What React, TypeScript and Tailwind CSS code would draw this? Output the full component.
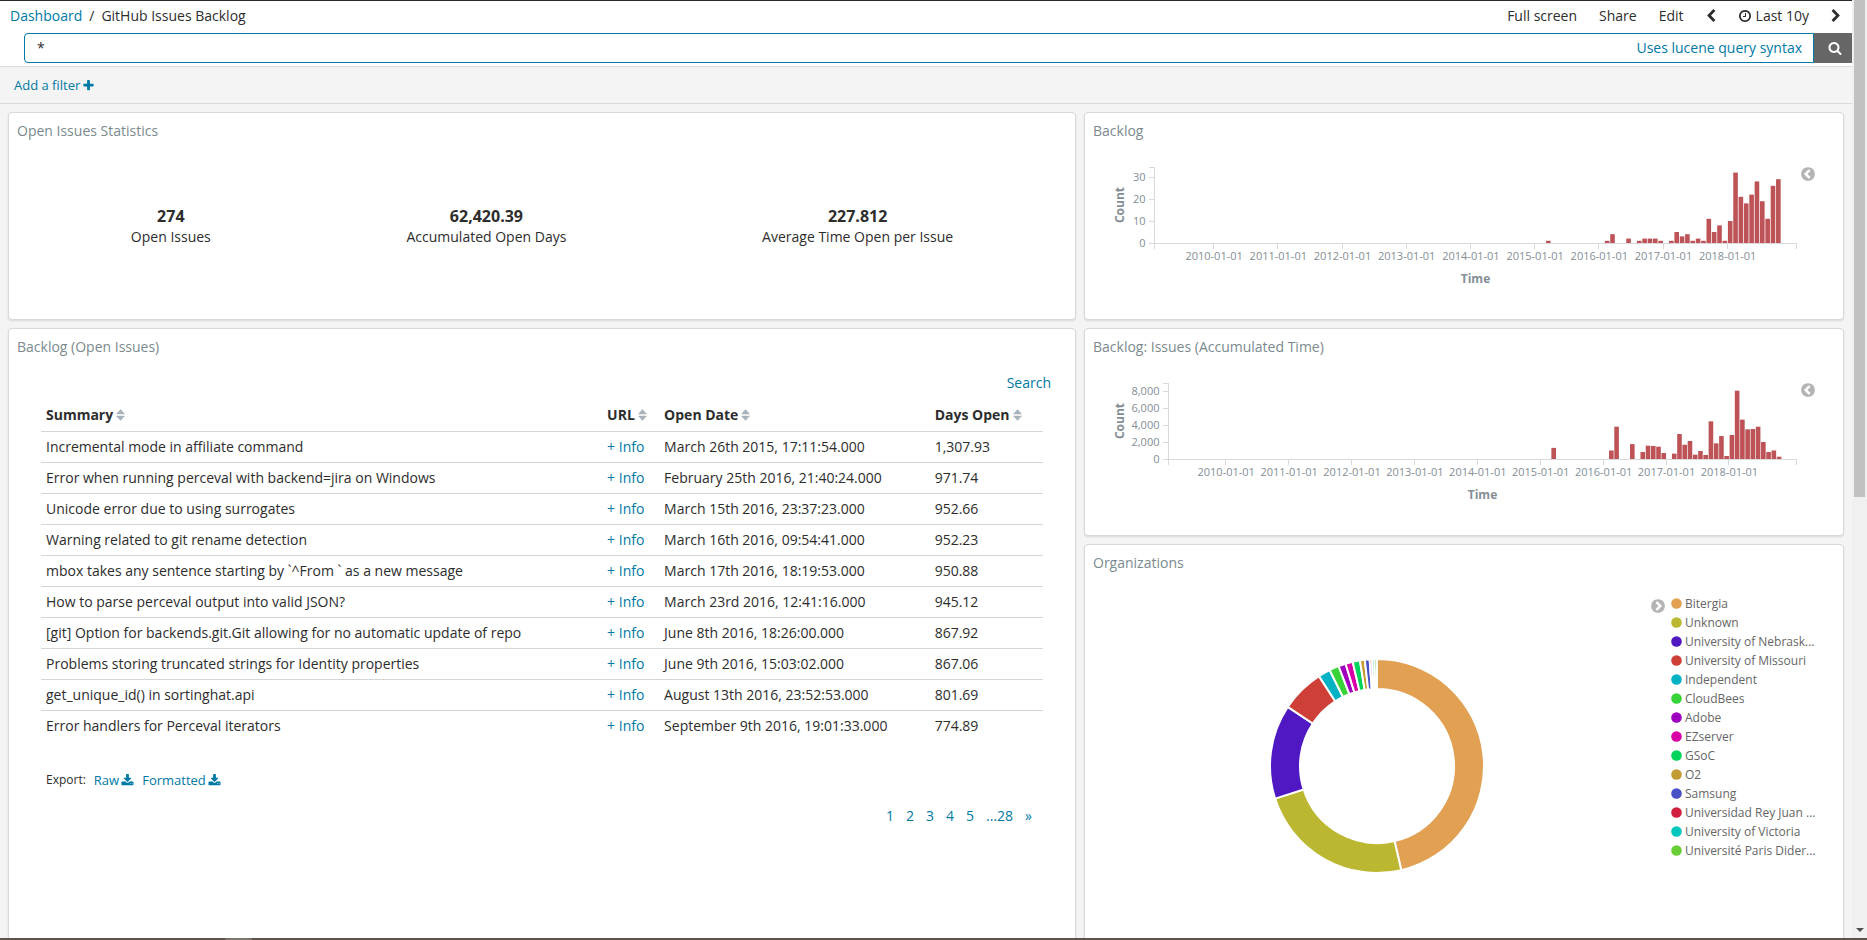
import type { ReactNode } from "react";

const ICONS = {
  clock:
    "M1024 544v448q0 14-9 23t-23 9h-320q-14 0-23-9t-9-23v-64q0-14 9-23t23-9h224v-352q0-14 9-23t23-9h64q14 0 23 9t9 23zm416 352q0-148-73-273t-198-198-273-73-273 73-198 198-73 273 73 273 198 198 273 73 273-73 198-198 73-273zm224 0q0 209-103 385.5t-279.5 279.5-385.5 103-385.5-103-279.5-279.5-103-385.5 103-385.5 279.5-279.5 385.5-103 385.5 103 279.5 279.5 103 385.5z",
  search:
    "M1216 832q0-185-131.5-316.5t-316.5-131.5-316.5 131.5-131.5 316.5 131.5 316.5 316.5 131.5 316.5-131.5 131.5-316.5zm512 832q0 52-38 90t-90 38q-54 0-90-38l-343-342q-179 124-399 124-143 0-273.5-55.5t-225-150-150-225-55.5-273.5 55.5-273.5 150-225 225-150 273.5-55.5 273.5 55.5 225 150 150 225 55.5 273.5q0 220-124 399l343 343q37 37 37 90z",
  plus: "M1600 736v192q0 40-28 68t-68 28h-416v416q0 40-28 68t-68 28h-192q-40 0-68-28t-28-68v-416h-416q-40 0-68-28t-28-68v-192q0-40 28-68t68-28h416v-416q0-40 28-68t68-28h192q40 0 68 28t28 68v416h416q40 0 68 28t28 68z",
  download:
    "M1344 1344q0-26-19-45t-45-19-45 19-19 45 19 45 45 19 45-19 19-45zm256 0q0-26-19-45t-45-19-45 19-19 45 19 45 45 19 45-19 19-45zm128-224v320q0 40-28 68t-68 28h-1472q-40 0-68-28t-28-68v-320q0-40 28-68t68-28h465l135 136q58 56 136 56t136-56l136-136h464q40 0 68 28t28 68zm-325-569q17 41-14 70l-448 448q-18 19-45 19t-45-19l-448-448q-31-29-14-70 17-39 59-39h256v-448q0-26 19-45t45-19h256q26 0 45 19t19 45v448h256q42 0 59 39z",
  chevronLeft:
    "M1427 301l-531 531 531 531q19 19 19 45t-19 45l-166 166q-19 19-45 19t-45-19l-742-742q-19-19-19-45t19-45l742-742q19-19 45-19t45 19l166 166q19 19 19 45t-19 45z",
  chevronRight:
    "M1363 877l-742 742q-19 19-45 19t-45-19l-166-166q-19-19-19-45t19-45l531-531-531-531q-19-19-19-45t19-45l166-166q19-19 45-19t45 19l742 742q19 19 19 45t-19 45z",
  circleLeft:
    "M1037 1395l102-102q19-19 19-45t-19-45l-307-307 307-307q19-19 19-45t-19-45l-102-102q-19-19-45-19t-45 19l-454 454q-19 19-19 45t19 45l454 454q19 19 45 19t45-19zm627-499q0 209-103 385.5t-279.5 279.5-385.5 103-385.5-103-279.5-279.5-103-385.5 103-385.5 279.5-279.5 385.5-103 385.5 103 279.5 279.5 103 385.5z",
};

function Icon({ name, className }: { name: keyof typeof ICONS; className: string }) {
  return (
    <svg viewBox="0 0 1792 1792" className={className} fill="currentColor" aria-hidden="true">
      <path d={ICONS[name]} />
    </svg>
  );
}

function Panel({ title, className = "", children }: { title: string; className?: string; children: ReactNode }) {
  return (
    <section
      className={`flex flex-col overflow-hidden rounded border border-[#d9d9d9] bg-white shadow-[0_1px_2px_rgba(0,0,0,0.12)] ${className}`}
    >
      <h2 className="flex h-9 shrink-0 items-center px-2 text-sm text-[#7b8a8e]">{title}</h2>
      {children}
    </section>
  );
}

function LegendToggle({ open = false }: { open?: boolean }) {
  return (
    <button
      type="button"
      aria-label="Toggle legend"
      className={`mt-[17px] flex h-4 w-[14px] shrink-0 items-center justify-center text-[#b4b4b4] ${open ? "rotate-180" : ""}`}
    >
      <Icon name="circleLeft" className="h-4 w-4 shrink-0" />
    </button>
  );
}

const STATS = [
  ["274", "Open Issues"],
  ["62,420.39", "Accumulated Open Days"],
  ["227.812", "Average Time Open per Issue"],
];

const ROWS = [
  ["Incremental mode in affiliate command", "March 26th 2015, 17:11:54.000", "1,307.93"],
  ["Error when running perceval with backend=jira on Windows", "February 25th 2016, 21:40:24.000", "971.74"],
  ["Unicode error due to using surrogates", "March 15th 2016, 23:37:23.000", "952.66"],
  ["Warning related to git rename detection", "March 16th 2016, 09:54:41.000", "952.23"],
  ["mbox takes any sentence starting by `^From ` as a new message", "March 17th 2016, 18:19:53.000", "950.88"],
  ["How to parse perceval output into valid JSON?", "March 23rd 2016, 12:41:16.000", "945.12"],
  ["[git] Option for backends.git.Git allowing for no automatic update of repo", "June 8th 2016, 18:26:00.000", "867.92"],
  ["Problems storing truncated strings for Identity properties", "June 9th 2016, 15:03:02.000", "867.06"],
  ["get_unique_id() in sortinghat.api", "August 13th 2016, 23:52:53.000", "801.69"],
  ["Error handlers for Perceval iterators", "September 9th 2016, 19:01:33.000", "774.89"],
];

// Months are counted from January 2018.
const MONTHS = [
  -34, -23, -22, -19, -17, -16, -15, -14, -13, -11, -10, -9, -8, -7, -6, -5, -4, -3, -2, -1, 0, 1, 2, 3, 4, 5, 6, 7, 8, 9,
];
const COUNTS = [1, 1, 4, 2, 1, 2, 2, 2, 1, 1, 5, 3, 4, 1, 2, 1, 11, 5, 8, 1, 10, 32, 21, 18, 22, 28, 19, 11, 26, 29];
const DAYS = [
  1308, 1000, 3800, 1750, 820, 1570, 1530, 1450, 700, 630, 2940, 1680, 2120, 510, 940, 470, 4430, 1840, 2700, 350, 2820,
  8040, 4630, 3490, 3530, 3800, 2000, 820, 1000, 270,
];

type ChartProps = {
  label: string;
  values: number[];
  ticks: number[];
  unit: number;
  axisX: number;
  start: number;
  year: number;
};

function BarChart({ label, values, ticks, unit, axisX, start, year }: ChartProps) {
  const base = 94.5;
  const right = 711.5;
  const years = [2010, 2011, 2012, 2013, 2014, 2015, 2016, 2017, 2018];
  return (
    <div className="flex items-start pr-7">
      <svg viewBox="0 0 716 170" className="min-w-0 flex-1" role="img" aria-label={label}>
        <g fill="#bd5257">
          {values.map((v, i) => (
            <rect
              key={MONTHS[i]}
              x={start + 0.2 + (MONTHS[i] * year) / 12}
              y={base - 0.5 - v * unit}
              width={4.6}
              height={v * unit}
            />
          ))}
        </g>
        <g stroke="#d9d9dc" fill="none" shapeRendering="crispEdges">
          <path d={`M${axisX - 6} 18.5H${axisX}V${base + 5.5}M${axisX - 6} ${base}H${right}V${base + 5.5}`} />
          {ticks.map((t) => (
            <path key={t} d={`M${axisX - 6} ${Math.round(base - t * unit - 0.5) + 0.5}H${axisX}`} />
          ))}
          {years.map((y) => (
            <path key={y} d={`M${Math.round(start - (2018 - y) * year) - 0.5} ${base}v5.5`} />
          ))}
        </g>
        <g fill="#848e96" fontSize={11}>
          {ticks.map((t) => (
            <text key={t} x={axisX - 9} y={base + 3 - t * unit} textAnchor="end">
              {t.toLocaleString("en-US")}
            </text>
          ))}
          {years.map((y) => (
            <text key={y} x={start - (2018 - y) * year} y={111} textAnchor="middle">
              {`${y}-01-01`}
            </text>
          ))}
        </g>
        <g fill="#848e96" fontSize={12} fontWeight={700} textAnchor="middle">
          <text x={(axisX + right) / 2} y={134}>
            Time
          </text>
          <text transform="translate(39 56) rotate(-90)">Count</text>
        </g>
      </svg>
      <LegendToggle />
    </div>
  );
}

const ORGS: [string, number, string][] = [
  ["Bitergia", 127, "#e1a052"],
  ["Unknown", 65, "#bcb730"],
  ["University of Nebrask...", 39, "#4f18c3"],
  ["University of Missouri", 18, "#ce4037"],
  ["Independent", 5, "#00b2c3"],
  ["CloudBees", 4, "#37d338"],
  ["Adobe", 3, "#9e00be"],
  ["EZserver", 3, "#d800a6"],
  ["GSoC", 3, "#00d45a"],
  ["O2", 2, "#c39b33"],
  ["Samsung", 2, "#4750c7"],
  ["Universidad Rey Juan ...", 1, "#d31f3f"],
  ["University of Victoria", 1, "#00c6bb"],
  ["Université Paris Dider...", 1, "#69ce35"],
];

function slicePath(from: number, to: number) {
  const outer = 107;
  const inner = 77;
  const point = (r: number, share: number) => {
    const a = share * 2 * Math.PI;
    return `${(r * Math.sin(a)).toFixed(3)} ${(-r * Math.cos(a)).toFixed(3)}`;
  };
  const large = to - from > 0.5 ? 1 : 0;
  return `M${point(outer, from)}A${outer} ${outer} 0 ${large} 1 ${point(outer, to)}L${point(inner, to)}A${inner} ${inner} 0 ${large} 0 ${point(inner, from)}Z`;
}

function Donut() {
  const total = ORGS.reduce((sum, org) => sum + org[1], 0);
  let sum = 0;
  return (
    <svg viewBox="-108 -108 216 216" className="h-[216px] w-[216px]" role="img" aria-label="Organizations">
      {ORGS.map(([name, value, color]) => {
        const from = sum / total;
        sum += value;
        return <path key={name} d={slicePath(from, sum / total)} fill={color} stroke="#fff" strokeWidth={2} />;
      })}
    </svg>
  );
}

function SortIcon() {
  return (
    <svg viewBox="0 0 9 12" className="h-3 w-[9px]" fill="#a9b3bb" aria-hidden="true">
      <path d="M4.5 0.5L8.5 5H0.5zM4.5 11.5L0.5 7H8.5z" stroke="#a9b3bb" strokeWidth={0.5} strokeLinejoin="round" />
    </svg>
  );
}

function Header({ children, className }: { children: string; className: string }) {
  return (
    <th scope="col" className={`h-[31px] px-[5px] text-left font-bold ${className}`}>
      <button type="button" className="flex items-center gap-[3px] whitespace-nowrap">
        {children}
        <SortIcon />
      </button>
    </th>
  );
}

export default function App() {
  return (
    <div className="flex h-screen flex-col overflow-hidden bg-[#f4f4f4] font-['Open_Sans','Noto_Sans',sans-serif] text-sm leading-5 text-[#2d2d2d]">
      <div className="flex min-h-0 flex-1">
        <div className="min-w-0 flex-1 overflow-hidden">
          <header className="border-t border-b border-t-[#2d2a2e] border-b-[#d9d9d9] bg-white pb-[3px]">
            <nav className="flex h-8 items-center justify-between pr-[11px] pb-[2px] pl-[10px]">
              <div className="flex gap-[7px]">
                <a href="#dashboards" className="text-[#0079a5]">
                  Dashboard
                </a>
                <span>/</span>
                <span>GitHub Issues Backlog</span>
              </div>
              <div className="flex items-center gap-[22px]">
                <button type="button">Full screen</button>
                <button type="button">Share</button>
                <button type="button">Edit</button>
                <button type="button" aria-label="Earlier" className="flex w-[10px] justify-center">
                  <Icon name="chevronLeft" className="h-[14px] w-[14px] shrink-0" />
                </button>
                <button type="button" className="flex items-center gap-1">
                  <Icon name="clock" className="h-[14px] w-[14px]" />
                  Last 10y
                </button>
                <button type="button" aria-label="Later" className="flex w-[10px] justify-center">
                  <Icon name="chevronRight" className="h-[14px] w-[14px] shrink-0" />
                </button>
              </div>
            </nav>
            <form className="flex h-[30px] pl-6" onSubmit={(e) => e.preventDefault()}>
              <div className="flex min-w-0 flex-1 items-center rounded-l border border-[#0079a5] pr-[11px] pl-3">
                <input
                  type="text"
                  aria-label="Search query"
                  defaultValue="*"
                  className="min-w-0 flex-1 bg-transparent outline-none"
                />
                <a href="#syntax" className="text-[#0079a5]">
                  Uses lucene query syntax
                </a>
              </div>
              <button
                type="submit"
                aria-label="Search"
                className="flex w-[38px] items-center justify-center bg-[#666] pl-1 text-white"
              >
                <Icon name="search" className="h-[14px] w-[14px]" />
              </button>
            </form>
          </header>

          <div className="flex h-[37px] items-center border-b border-[#d9d9d9] px-[14px]">
            <button type="button" className="flex items-center gap-[2px] text-[13px] text-[#0079a5]">
              Add a filter
              <Icon name="plus" className="h-[13px] w-[13px]" />
            </button>
          </div>

          <main className="grid grid-cols-[1068fr_760fr] gap-2 p-2">
            <div className="flex min-w-0 flex-col gap-2">
              <Panel title="Open Issues Statistics" className="h-52">
                <dl className="flex justify-around px-6 pt-14">
                  {STATS.map(([value, label]) => (
                    <div key={label} className="flex flex-col-reverse text-center">
                      <dt>{label}</dt>
                      <dd className="h-[22px] text-base leading-[22px] font-bold">{value}</dd>
                    </div>
                  ))}
                </dl>
              </Panel>

              <Panel title="Backlog (Open Issues)" className="min-h-[640px]">
                <div className="flex h-[35px] shrink-0 items-center justify-end pr-6">
                  <button type="button" className="text-[#0079a5]">
                    Search
                  </button>
                </div>
                <div className="px-8">
                  <table className="w-full table-fixed">
                    <thead>
                      <tr>
                        <Header className="w-[56%]">Summary</Header>
                        <Header className="w-[57px]">URL</Header>
                        <Header className="w-[27%]">Open Date</Header>
                        <Header className="">Days Open</Header>
                      </tr>
                    </thead>
                    <tbody>
                      {ROWS.map(([summary, date, days]) => (
                        <tr key={summary} className="border-t border-[#d5d5d5]">
                          <td className="h-[31px] px-[5px]">{summary}</td>
                          <td className="px-[5px] whitespace-nowrap">
                            <a href="#issue" className="text-[#0079a5]">
                              + Info
                            </a>
                          </td>
                          <td className="px-[5px]">{date}</td>
                          <td className="px-[5px]">{days}</td>
                        </tr>
                      ))}
                    </tbody>
                  </table>
                  <div className="mt-[29px] flex items-center gap-2 px-[5px] text-[13px] text-[#0079a5]">
                    <span className="text-xs leading-5 text-[#2d2d2d]">Export:</span>
                    <a href="#raw" className="flex items-center gap-[2px]">
                      Raw
                      <Icon name="download" className="h-[13px] w-[13px]" />
                    </a>
                    <a href="#formatted" className="flex items-center gap-[2px]">
                      Formatted
                      <Icon name="download" className="h-[13px] w-[13px]" />
                    </a>
                  </div>
                  <div className="mt-4 flex justify-end gap-3 pr-[11px] text-[#0079a5]">
                    {["1", "2", "3", "4", "5", "...28", "»"].map((page) => (
                      <button type="button" key={page}>
                        {page}
                      </button>
                    ))}
                  </div>
                </div>
              </Panel>
            </div>

            <div className="flex min-w-0 flex-col gap-2">
              <Panel title="Backlog" className="h-52">
                <BarChart
                  label="Backlog"
                  values={COUNTS}
                  ticks={[30, 20, 10, 0]}
                  unit={2.2}
                  axisX={69.5}
                  start={642.7}
                  year={64.2}
                />
              </Panel>
              <Panel title="Backlog: Issues (Accumulated Time)" className="h-52">
                <BarChart
                  label="Accumulated time"
                  values={DAYS}
                  ticks={[8000, 6000, 4000, 2000, 0]}
                  unit={0.0085}
                  axisX={83.5}
                  start={644.4}
                  year={62.9}
                />
              </Panel>
              <Panel title="Organizations" className="min-h-[424px]">
                <div className="flex items-start pr-7">
                  <div className="flex flex-1 justify-center pt-[77px] pl-[18px]">
                    <Donut />
                  </div>
                  <LegendToggle open />
                  <ul className="mt-[13px] ml-[6px] w-36 text-xs leading-[19px] whitespace-nowrap text-[#666]">
                    {ORGS.map(([name, , color]) => (
                      <li key={name} className="flex items-center gap-[3px]">
                        <svg viewBox="0 0 11 11" className="h-[11px] w-[11px] shrink-0" aria-hidden="true">
                          <circle cx="5.5" cy="5.5" r="5.3" fill={color} />
                        </svg>
                        {name}
                      </li>
                    ))}
                  </ul>
                </div>
              </Panel>
            </div>
          </main>
        </div>

        <div className="flex w-[15px] shrink-0 flex-col items-center justify-between bg-[#f0f0f0]" aria-hidden="true">
          <div className="h-[53%] w-[11px] bg-[#c1c1c1]" />
          <svg viewBox="0 0 8 4" className="mb-[6px] h-1 w-2" fill="#505050">
            <path d="M0 0H8L4 4z" />
          </svg>
        </div>
      </div>
      <div className="h-[2px] shrink-0 bg-[#5c5449] pl-[225px]">
        <div className="h-full w-[27px] rounded-t bg-[#7c766c]" />
      </div>
    </div>
  );
}
